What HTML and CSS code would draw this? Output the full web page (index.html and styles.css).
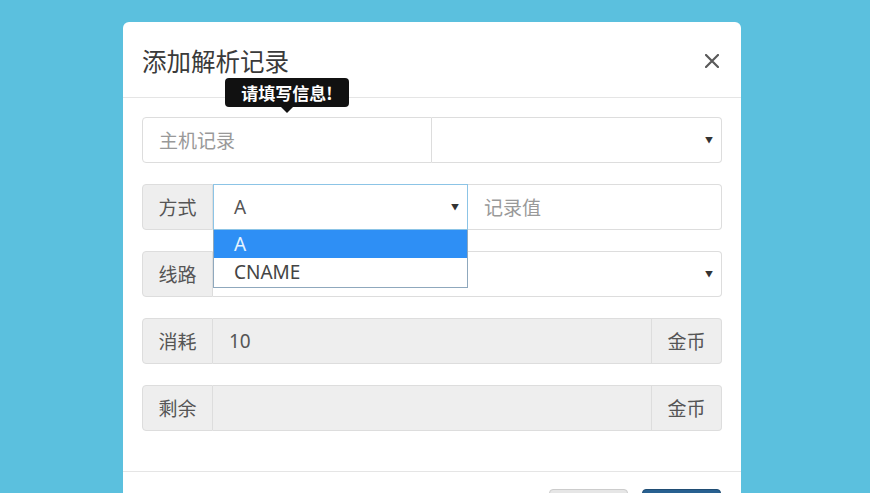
FILE: index.html
```html
<!DOCTYPE html>
<html lang="zh">
<head>
<meta charset="utf-8">
<title>添加解析记录</title>
<link rel="stylesheet" href="styles.css">
</head>
<body>
<div class="modal">
  <div class="modal-header">
    <h4 class="modal-title">添加解析记录</h4>
    <span class="close" aria-label="关闭">
      <svg width="14" height="14" viewBox="0 0 14 14"><path d="M1 1L13 13M13 1L1 13" stroke="#5a5a5a" stroke-width="2.2" stroke-linecap="round"/></svg>
    </span>
  </div>
  <div class="tooltip">请填写信息!</div>
  <div class="modal-body">
    <div class="row">
      <div class="field left-round placeholder w-half">主机记录</div>
      <div class="field select right-round w-half no-left"><span class="arrow">▼</span></div>
    </div>
    <div class="row has-menu">
      <div class="addon left-round">方式</div>
      <div class="field select focus w-255 sel-pad">A<span class="arrow">▼</span></div>
      <div class="field placeholder right-round grow no-left">记录值</div>
      <div class="menu">
        <div class="opt active">A</div>
        <div class="opt">CNAME</div>
      </div>
    </div>
    <div class="row">
      <div class="addon left-round">线路</div>
      <div class="field select right-round grow no-left"><span class="arrow">▼</span></div>
    </div>
    <div class="row">
      <div class="addon left-round">消耗</div>
      <div class="field readonly grow no-left">10</div>
      <div class="addon right-round no-left">金币</div>
    </div>
    <div class="row">
      <div class="addon left-round">剩余</div>
      <div class="field readonly grow no-left"></div>
      <div class="addon right-round no-left">金币</div>
    </div>
  </div>
  <div class="modal-footer">
    <span class="btn btn-default">取消</span>
    <span class="btn btn-primary">确定</span>
  </div>
</div>
</body>
</html>
```
FILE: styles.css
```css
html, body {
  margin: 0;
  padding: 0;
}
body {
  background: #5bc0de;
  height: 493px;
  overflow: hidden;
  font-family: "Noto Sans", "Noto Sans CJK SC", sans-serif;
  color: #555;
}
.modal {
  position: relative;
  width: 618px;
  margin: 22px 0 0 123px;
  background: #fff;
  border-radius: 6px 6px 0 0;
}
.modal-header {
  height: 75px;
  border-bottom: 1px solid #e5e5e5;
  padding: 0 22px 0 19px;
  display: flex;
  align-items: center;
  justify-content: space-between;
  box-sizing: content-box;
}
.modal-title {
  margin: 0;
  font-family: "Noto Sans CJK SC", sans-serif;
  font-weight: 400;
  font-size: 24.5px;
  line-height: 30px;
  color: #3a3a3a;
  position: relative;
  top: 1px;
}
.close {
  display: flex;
  position: relative;
  top: 1px;
}
.tooltip {
  position: absolute;
  left: 102px;
  top: 56px;
  width: 124px;
  height: 29px;
  background: #111;
  color: #fff;
  border-radius: 4px;
  font-family: "Noto Sans CJK SC", sans-serif;
  font-weight: 700;
  font-size: 17px;
  line-height: 29px;
  text-align: center;
}
.tooltip::after {
  content: "";
  position: absolute;
  left: 56px;
  top: 29px;
  border-left: 6px solid transparent;
  border-right: 6px solid transparent;
  border-top: 6px solid #111;
}
.modal-body {
  padding: 19px 19px 40px;
  display: flex;
  flex-direction: column;
  gap: 21px;
}
.row {
  display: flex;
  height: 46px;
  position: relative;
}
.field, .addon {
  box-sizing: border-box;
  height: 46px;
  border: 1px solid #ddd;
  font-size: 19px;
  line-height: 44px;
  padding: 0 16px;
  font-family: "Noto Sans", "Noto Sans CJK SC", sans-serif;
  color: #555;
  position: relative;
  white-space: nowrap;
}
.addon {
  width: 71px;
  flex: none;
  background: #eee;
  text-align: center;
  padding: 0;
  font-family: "Noto Sans CJK SC", sans-serif;
}
.row .addon.right-round { width: 70px; }
.placeholder {
  color: #999;
  font-family: "Noto Sans CJK SC", sans-serif;
}
.readonly { background: #eee; }
.left-round { border-radius: 4px 0 0 4px; }
.right-round { border-radius: 0 4px 4px 0; }
.no-left { border-left: none; }
.w-half { width: 290px; flex: none; }
.w-255 { width: 255px; flex: none; }
.grow { flex: 1; }
.sel-pad { padding-left: 20px; }
.focus { border-color: #8cc4e6; }
.arrow {
  position: absolute;
  right: 8px;
  top: 0;
  font-size: 8px;
  color: #333;
  line-height: 44px;
}
.menu {
  position: absolute;
  left: 71px;
  top: 46px;
  width: 255px;
  box-sizing: border-box;
  border: 1px solid #8fa8bd;
  border-top: none;
  background: #fff;
  z-index: 2;
  padding-bottom: 1px;
}
.opt {
  height: 28px;
  line-height: 28px;
  padding-left: 20px;
  font-size: 19px;
  color: #444;
}
.opt.active {
  background: #2e8ff5;
  color: #e6f4ff;
}
.modal-footer {
  border-top: 1px solid #e5e5e5;
  padding: 17px 20px 20px;
  display: flex;
  justify-content: flex-end;
  gap: 14px;
}
.btn {
  width: 79px;
  height: 34px;
  box-sizing: border-box;
  border-radius: 4px;
  font-size: 15px;
  line-height: 32px;
  text-align: center;
  font-family: "Noto Sans CJK SC", sans-serif;
}
.btn-default {
  background: #e6e6e6;
  border: 1px solid #ccc;
  color: #333;
}
.btn-primary {
  background: #286090;
  border: 1px solid #204d74;
  color: #fff;
}
```
